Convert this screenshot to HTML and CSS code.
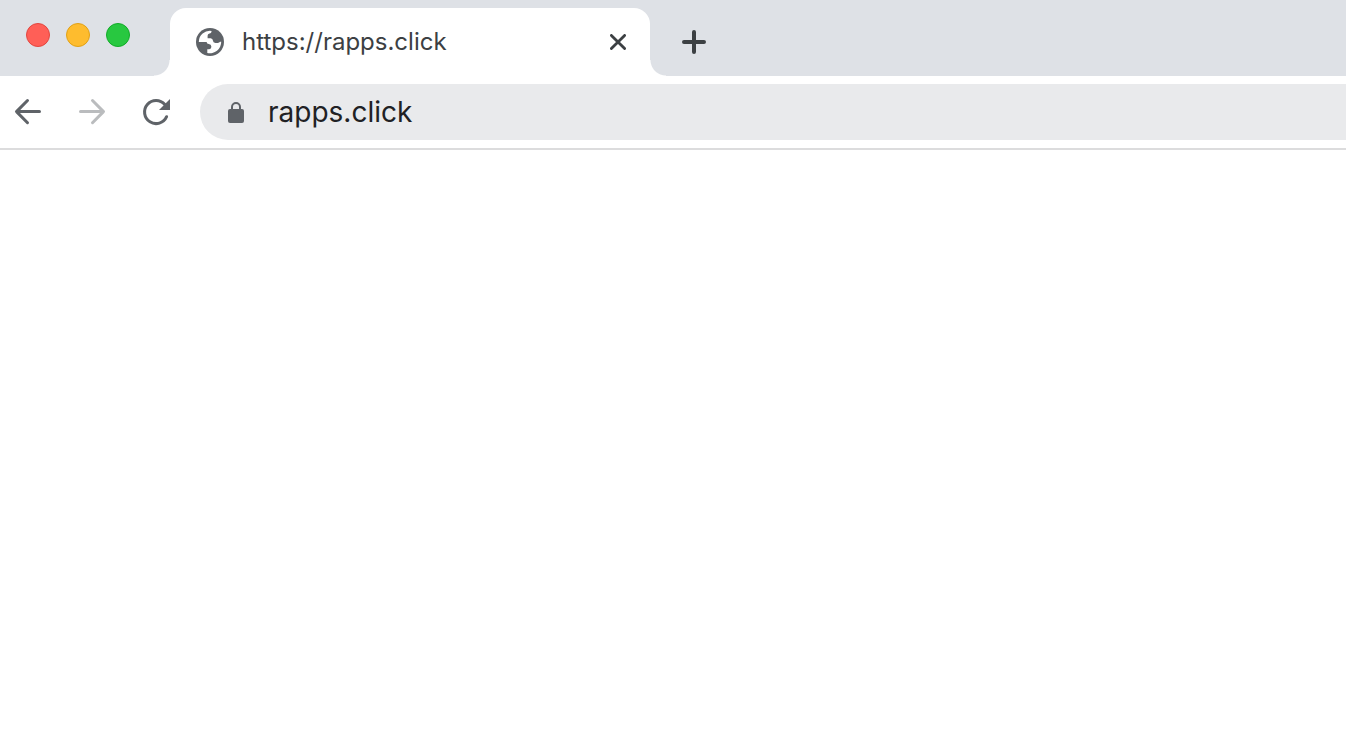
FILE: index.html
```html
<!DOCTYPE html>
<html lang="en">
<head>
<meta charset="utf-8">
<title>https://rapps.click</title>
<link rel="stylesheet" href="styles.css">
</head>
<body>
<header class="browser">
  <div class="tabstrip">
    <div class="window-controls">
      <button class="light light-close" aria-label="Close window"></button>
      <button class="light light-minimize" aria-label="Minimize window"></button>
      <button class="light light-zoom" aria-label="Zoom window"></button>
    </div>
    <div class="tab">
      <svg class="globe" width="28" height="28" viewBox="0 0 28 28" aria-hidden="true">
        <circle cx="14" cy="14" r="14" fill="#5f6368"/>
        <path d="M2.8 14A11.2 11.2 0 0 1 15.5 2.9V3.8Q15.4 5.4 13.5 5.6Q11.6 5.9 11.6 7.8V10.2H14.6Q16.8 10.4 16.9 12.4Q17 14.8 19.4 14.9H21.8Q23.4 14.8 24 13.8H25.2A11.2 11.2 0 0 1 11.3 24.9V21.2H13.2Q15.4 21 15.4 18.8Q15.3 16.4 12.8 16.1Q10.8 15.9 10.6 14Z" fill="#fff"/>
      </svg>
      <span class="tab-title">https://rapps.click</span>
      <button class="icon-button tab-close" aria-label="Close tab">
        <svg width="16" height="16" viewBox="0 0 16 16"><path d="M1.4 1.4 14.6 14.6M14.6 1.4 1.4 14.6" stroke="#3c4043" stroke-width="2.8" stroke-linecap="round"/></svg>
      </button>
    </div>
    <button class="icon-button new-tab" aria-label="New tab">
      <svg width="24" height="24" viewBox="0 0 24 24"><path d="M12 2V22M2 12H22" stroke="#3c4043" stroke-width="4" stroke-linecap="round"/></svg>
    </button>
  </div>
  <div class="toolbar">
    <nav class="navigation" aria-label="History">
      <button class="icon-button" aria-label="Back">
        <svg width="32" height="32" viewBox="0 0 32 32" fill="none" stroke="#5f6368" stroke-width="3" stroke-linecap="round" stroke-linejoin="round"><path d="M15.5 4.5 4.5 15.6 15.5 26.7M4.5 15.6H27.5"/></svg>
      </button>
      <button class="icon-button" aria-label="Forward" disabled>
        <svg width="32" height="32" viewBox="0 0 32 32" fill="none" stroke="#babcbe" stroke-width="3" stroke-linecap="round" stroke-linejoin="round"><path d="M16.5 4.5 27.5 15.6 16.5 26.7M27.5 15.6H4.5"/></svg>
      </button>
      <button class="icon-button" aria-label="Reload">
        <svg width="32" height="32" viewBox="0 0 32 32"><path d="M24.8 8.6A11.5 11.5 0 1 0 26.6 20.7" fill="none" stroke="#5f6368" stroke-width="3" stroke-linecap="round"/><path d="M30 3V14H19Z" fill="#5f6368"/></svg>
      </button>
    </nav>
    <label class="address-bar">
      <svg width="16" height="24" viewBox="0 0 16 24" aria-hidden="true"><rect y="9" width="16" height="14" rx="2" fill="#5f6368"/><path d="M4 10V7A4 4 0 0 1 12 7V10" fill="none" stroke="#5f6368" stroke-width="2"/></svg>
      <input class="address-input" type="text" value="rapps.click" aria-label="Address" spellcheck="false">
    </label>
  </div>
</header>
<main class="page"></main>
</body>
</html>
```
FILE: styles.css
```css
* {
  box-sizing: border-box;
}

body {
  margin: 0;
  min-height: 100vh;
  background: #fff;
  font-family: Inter, "Liberation Sans", sans-serif;
}

button {
  padding: 0;
  border: 0;
  background: none;
}

svg {
  display: block;
  flex: none;
}

.tabstrip {
  display: flex;
  height: 76px;
  padding: 8px 0 0 26px;
  background: #dee1e6;
}

.window-controls {
  display: flex;
  gap: 16px;
  margin: 15px 40px 0 0;
}

.light {
  width: 24px;
  height: 24px;
  border: 1px solid;
  border-radius: 50%;
}

.light-close {
  background: #ff5f57;
  border-color: #e2463f;
}

.light-minimize {
  background: #febc2e;
  border-color: #e1a116;
}

.light-zoom {
  background: #28c840;
  border-color: #12ac28;
}

.tab {
  position: relative;
  display: flex;
  align-items: center;
  gap: 18px;
  flex: 0 1 480px;
  padding: 0 24px 0 26px;
  border-radius: 16px 16px 0 0;
  background: #fff;
}

.tab::before,
.tab::after {
  content: "";
  position: absolute;
  bottom: 0;
  width: 16px;
  height: 16px;
}

.tab::before {
  right: 100%;
  background: radial-gradient(circle at 0 0, #dee1e6 15px, #fff 16px);
}

.tab::after {
  left: 100%;
  background: radial-gradient(circle at 100% 0, #dee1e6 15px, #fff 16px);
}

.tab-title {
  flex: 1;
  color: #3c4043;
  font-size: 24px;
  line-height: 32px;
}

.icon-button {
  display: grid;
  place-items: center;
}

.new-tab {
  margin-left: 32px;
}

.toolbar {
  display: flex;
  align-items: center;
  gap: 28px;
  height: 74px;
  padding: 8px 0 8px 12px;
  border-bottom: 2px solid #dcdcdd;
}

.navigation {
  display: flex;
  gap: 32px;
}

.address-bar {
  display: flex;
  align-items: center;
  gap: 24px;
  flex: 1;
  height: 56px;
  padding-left: 28px;
  border-radius: 28px 0 0 28px;
  background: #e9eaec;
}

.address-input {
  flex: 1;
  min-width: 0;
  padding: 0;
  border: 0;
  outline: 0;
  background: none;
  color: #202124;
  font: inherit;
  font-size: 28px;
  line-height: 36px;
}
```
